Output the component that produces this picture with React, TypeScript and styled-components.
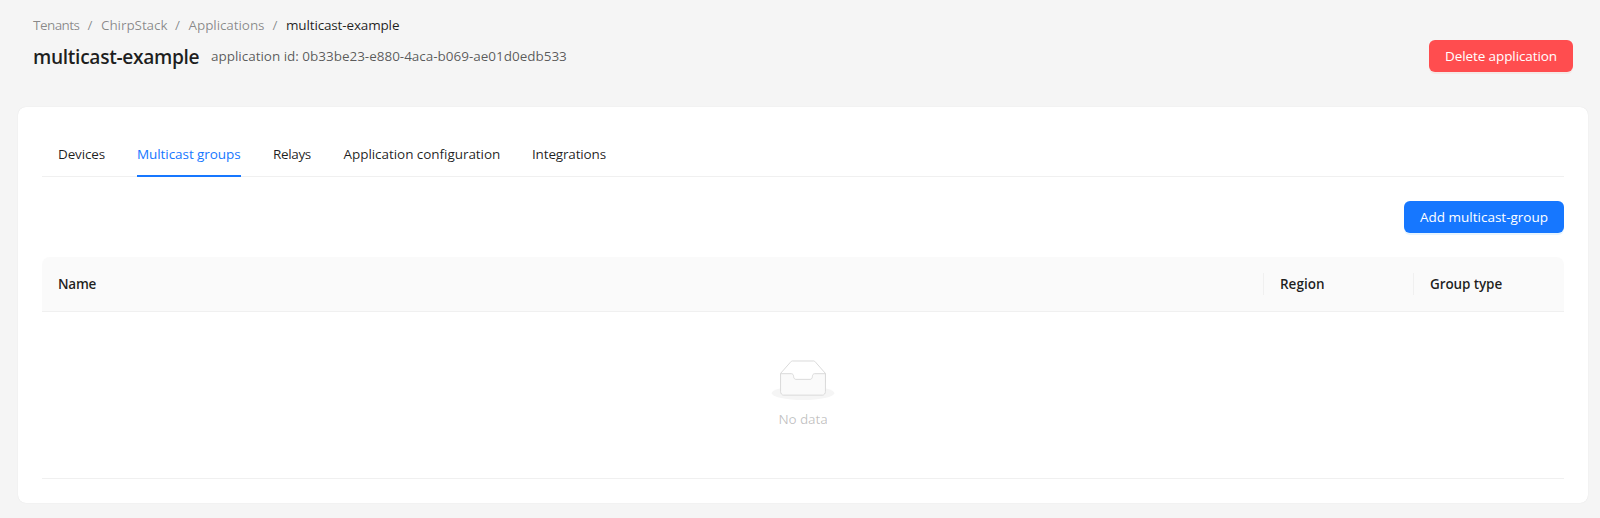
import React from "react";
import styled, { createGlobalStyle } from "styled-components";

const GlobalStyle = createGlobalStyle`
  * { box-sizing: border-box; }
  body {
    margin: 0;
    background: #f5f5f5;
    color: rgba(0, 0, 0, 0.88);
    font-family: "Segoe UI", "Open Sans", "Noto Sans", sans-serif;
    font-size: 13.5px;
    line-height: 22px;
  }
`;

const Page = styled.main`
  height: 518px;
  padding: 14px 12px 0 18px;
  overflow: hidden;
`;

const PageHeader = styled.header`
  height: 93px;
  padding: 0 15px;
`;

const Breadcrumb = styled.nav`
  display: flex;
  height: 22px;
`;

const Crumb = styled.span<{ $width: number; $current?: boolean; $tracking: number }>`
  width: ${(p) => p.$width}px;
  white-space: nowrap;
  letter-spacing: ${(p) => p.$tracking}px;
  color: ${(p) => (p.$current ? "rgba(0, 0, 0, 0.88)" : "rgba(0, 0, 0, 0.45)")};
`;

const Separator = styled.span`
  width: 22px;
  text-align: center;
  color: rgba(0, 0, 0, 0.45);
`;

const Heading = styled.div`
  display: flex;
  align-items: center;
  height: 32px;
  margin-top: 4px;
`;

const Title = styled.h1`
  width: 166px;
  margin: 0 12px 0 0;
  padding-top: 2px;
  font-size: 19.2px;
  font-weight: 600;
  line-height: 32px;
  white-space: nowrap;
  letter-spacing: -0.33px;
`;

const Subtitle = styled.span`
  color: rgba(0, 0, 0, 0.65);
  white-space: nowrap;
  letter-spacing: -0.02px;
`;

const Button = styled.button<{ $danger?: boolean; $width: number; $tracking: number }>`
  width: ${(p) => p.$width}px;
  height: 32px;
  margin-left: auto;
  padding: 0;
  border: 0;
  border-radius: 6px;
  font: inherit;
  white-space: nowrap;
  letter-spacing: ${(p) => p.$tracking}px;
  color: #fff;
  background: ${(p) => (p.$danger ? "#ff4d4f" : "#1677ff")};
  box-shadow: 0 2px 0 ${(p) => (p.$danger ? "rgba(255, 38, 5, 0.06)" : "rgba(5, 145, 255, 0.1)")};
`;

const Card = styled.section`
  height: 396px;
  padding: 24px;
  border-radius: 8px;
  background: #fff;
  box-shadow: 0 0 1px rgba(0, 0, 0, 0.12);
`;

const Tabs = styled.div`
  display: flex;
  gap: 32px;
  height: 46px;
  padding-left: 16px;
  border-bottom: 1px solid #f0f0f0;
`;

const Tab = styled.div<{ $width: number; $active?: boolean; $tracking: number }>`
  width: ${(p) => p.$width}px;
  height: 46px;
  padding-top: 12px;
  white-space: nowrap;
  letter-spacing: ${(p) => p.$tracking}px;
  color: ${(p) => (p.$active ? "#1677ff" : "inherit")};
  border-bottom: 2px solid ${(p) => (p.$active ? "#1677ff" : "transparent")};
`;

const Toolbar = styled.div`
  display: flex;
  margin: 24px 0;
`;

const TableHead = styled.div`
  display: grid;
  grid-template-columns: 1fr 150px 150px;
  align-items: center;
  height: 55px;
  border-radius: 8px 8px 0 0;
  border-bottom: 1px solid #f0f0f0;
  background: #fafafa;
`;

const HeadCell = styled.div<{ $divided?: boolean; $tracking: number }>`
  height: 22px;
  padding-left: 16px;
  border-right: 1px solid ${(p) => (p.$divided ? "#f0f0f0" : "transparent")};
  font-weight: 600;
  letter-spacing: ${(p) => p.$tracking}px;
`;

const Empty = styled.div`
  display: flex;
  flex-direction: column;
  align-items: center;
  gap: 8px;
  height: 167px;
  padding-top: 48px;
  border-bottom: 1px solid #f0f0f0;
  color: rgba(0, 0, 0, 0.25);
  letter-spacing: -0.12px;
`;

const EmptyIcon = () => (
  <svg width="64" height="40" viewBox="0 0 64 41">
    <g transform="translate(0 1)" fill="none" fillRule="evenodd">
      <ellipse fill="#f5f5f5" cx="32" cy="33" rx="32" ry="7" />
      <g fillRule="nonzero" stroke="#d9d9d9">
        <path d="M55 12.76L44.854 1.258C44.367.474 43.656 0 42.907 0H21.093c-.749 0-1.46.474-1.947 1.257L9 12.761V22h46v-9.24z" />
        <path
          d="M41.613 15.931c0-1.605.994-2.93 2.227-2.931H55v18.137C55 33.26 53.68 35 52.05 35h-40.1C10.32 35 9 33.259 9 31.137V13h11.16c1.233 0 2.227 1.323 2.227 2.928v.022c0 1.605 1.005 2.901 2.237 2.901h14.752c1.232 0 2.237-1.308 2.237-2.913v-.007z"
          fill="#fafafa"
        />
      </g>
    </g>
  </svg>
);

const tabs = [
  { label: "Devices", width: 47, tracking: -0.15 },
  { label: "Multicast groups", width: 104, tracking: -0.07, active: true },
  { label: "Relays", width: 38.5, tracking: -0.35 },
  { label: "Application configuration", width: 156.5, tracking: -0.05 },
  { label: "Integrations", width: 75, tracking: -0.16 },
];

export default function App() {
  return (
    <Page>
      <GlobalStyle />
      <PageHeader>
        <Breadcrumb>
          <Crumb $width={46} $tracking={-0.55}>Tenants</Crumb>
          <Separator>/</Separator>
          <Crumb $width={65.5} $tracking={-0.08}>ChirpStack</Crumb>
          <Separator>/</Separator>
          <Crumb $width={75.5} $tracking={-0.08}>Applications</Crumb>
          <Separator>/</Separator>
          <Crumb $width={114} $tracking={-0.15} $current>multicast-example</Crumb>
        </Breadcrumb>
        <Heading>
          <Title>multicast-example</Title>
          <Subtitle>application id: 0b33be23-e880-4aca-b069-ae01d0edb533</Subtitle>
          <Button $danger $width={144} $tracking={-0.1}>Delete application</Button>
        </Heading>
      </PageHeader>
      <Card>
        <Tabs>
          {tabs.map((t) => (
            <Tab key={t.label} $width={t.width} $active={t.active} $tracking={t.tracking}>
              {t.label}
            </Tab>
          ))}
        </Tabs>
        <Toolbar>
          <Button $width={160} $tracking={0}>Add multicast-group</Button>
        </Toolbar>
        <TableHead>
          <HeadCell $divided $tracking={-0.25}>Name</HeadCell>
          <HeadCell $divided $tracking={0}>Region</HeadCell>
          <HeadCell $tracking={-0.1}>Group type</HeadCell>
        </TableHead>
        <Empty>
          <EmptyIcon />
          <span>No data</span>
        </Empty>
      </Card>
    </Page>
  );
}
